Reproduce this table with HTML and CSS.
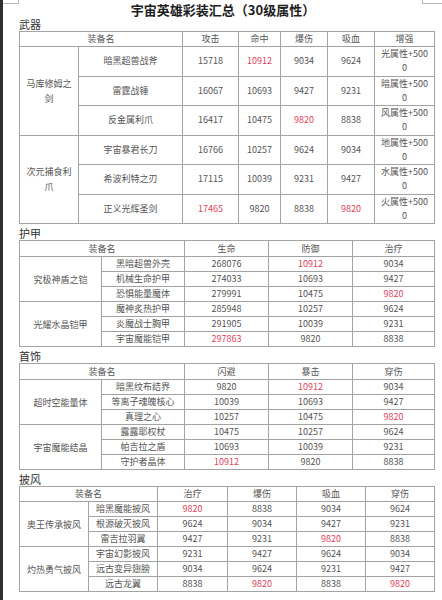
FILE: index.html
```html
<!DOCTYPE html>
<html lang="zh-CN">
<head>
<meta charset="utf-8">
<title>宇宙英雄彩装汇总</title>
<link rel="stylesheet" href="styles.css">
</head>
<body>
<div class="corner corner-left"></div>
<div class="corner corner-right"></div>
<main class="page">
  <h1 class="title">宇宙英雄彩装汇总（30级属性）</h1>

  <section class="section first">
    <h2 class="label">武器</h2>
    <table class="grid weapon">
      <colgroup><col class="w59"><col class="w104"><col class="w56"><col class="w42"><col class="w47"><col class="w47"><col class="w60"></colgroup>
      <tr class="head"><td colspan="2">装备名</td><td>攻击</td><td>命中</td><td>爆伤</td><td>吸血</td><td>增强</td></tr>
      <tr class="tall"><td rowspan="3" class="group">马库修姆之剑</td><td>暗黑超兽战斧</td><td>15718</td><td class="red">10912</td><td>9034</td><td>9624</td><td class="wrap">光属性+5000</td></tr>
      <tr class="tall"><td>雷霆战锤</td><td>16067</td><td>10693</td><td>9427</td><td>9231</td><td class="wrap">暗属性+5000</td></tr>
      <tr class="tall"><td>反金属利爪</td><td>16417</td><td>10475</td><td class="red">9820</td><td>8838</td><td class="wrap">风属性+5000</td></tr>
      <tr class="tall"><td rowspan="3" class="group">次元捕食利爪</td><td>宇宙暴君长刀</td><td>16766</td><td>10257</td><td>9624</td><td>9034</td><td class="wrap">地属性+5000</td></tr>
      <tr class="tall"><td>希波利特之刃</td><td>17115</td><td>10039</td><td>9231</td><td>9427</td><td class="wrap">水属性+5000</td></tr>
      <tr class="tall"><td>正义光辉圣剑</td><td class="red">17465</td><td>9820</td><td>8838</td><td class="red">9820</td><td class="wrap">火属性+5000</td></tr>
    </table>
  </section>

  <section class="section">
    <h2 class="label">护甲</h2>
    <table class="grid five">
      <colgroup><col class="w82"><col class="w83"><col class="w84"><col class="w84"><col class="w82"></colgroup>
      <tr class="head"><td colspan="2">装备名</td><td>生命</td><td>防御</td><td>治疗</td></tr>
      <tr><td rowspan="3" class="group">究极神盾之铠</td><td>黑暗超兽外壳</td><td>268076</td><td class="red">10912</td><td>9034</td></tr>
      <tr><td>机械生命护甲</td><td>274033</td><td>10693</td><td>9427</td></tr>
      <tr><td>恐惧能量魔体</td><td>279991</td><td>10475</td><td class="red">9820</td></tr>
      <tr><td rowspan="3" class="group">光耀水晶铠甲</td><td>魔神炙热护甲</td><td>285948</td><td>10257</td><td>9624</td></tr>
      <tr><td>炎魔战士胸甲</td><td>291905</td><td>10039</td><td>9231</td></tr>
      <tr><td>宇宙魔能铠甲</td><td class="red">297863</td><td>9820</td><td>8838</td></tr>
    </table>
  </section>

  <section class="section">
    <h2 class="label">首饰</h2>
    <table class="grid five">
      <colgroup><col class="w82"><col class="w83"><col class="w84"><col class="w84"><col class="w82"></colgroup>
      <tr class="head"><td colspan="2">装备名</td><td>闪避</td><td>暴击</td><td>穿伤</td></tr>
      <tr><td rowspan="3" class="group">超时空能量体</td><td>暗黑纹布结界</td><td>9820</td><td class="red">10912</td><td>9034</td></tr>
      <tr><td>等离子魂魄核心</td><td>10039</td><td>10693</td><td>9427</td></tr>
      <tr><td>真理之心</td><td>10257</td><td>10475</td><td class="red">9820</td></tr>
      <tr><td rowspan="3" class="group">宇宙魔能结晶</td><td>露露耶权杖</td><td>10475</td><td>10257</td><td>9624</td></tr>
      <tr><td>帕吉拉之盾</td><td>10693</td><td>10039</td><td>9231</td></tr>
      <tr><td>守护者晶体</td><td class="red">10912</td><td>9820</td><td>8838</td></tr>
    </table>
  </section>

  <section class="section">
    <h2 class="label">披风</h2>
    <table class="grid six">
      <colgroup><col class="w69"><col class="w69"><col class="w70"><col class="w69"><col class="w69"><col class="w69"></colgroup>
      <tr class="head"><td colspan="2">装备名</td><td>治疗</td><td>爆伤</td><td>吸血</td><td>穿伤</td></tr>
      <tr><td rowspan="3" class="group">奥王传承披风</td><td>暗黑魔能披风</td><td class="red">9820</td><td>8838</td><td>9034</td><td>9624</td></tr>
      <tr><td>根源破灭披风</td><td>9624</td><td>9034</td><td>9427</td><td>9231</td></tr>
      <tr><td>雷吉拉羽翼</td><td>9427</td><td>9231</td><td class="red">9820</td><td>8838</td></tr>
      <tr><td rowspan="3" class="group">灼热勇气披风</td><td>宇宙幻影披风</td><td>9231</td><td>9427</td><td>9624</td><td>9034</td></tr>
      <tr><td>远古变异翅膀</td><td>9034</td><td>9624</td><td>9231</td><td>9427</td></tr>
      <tr><td>远古龙翼</td><td>8838</td><td class="red">9820</td><td>8838</td><td class="red">9820</td></tr>
    </table>
  </section>
</main>
</body>
</html>
```

FILE: styles.css
```css
html, body {
  margin: 0;
  padding: 0;
  background: #ffffff;
}

body {
  position: relative;
  width: 442px;
  height: 600px;
  overflow: hidden;
  box-sizing: border-box;
  border-left: 3px solid #2f2f2f;
  font-family: "Noto Sans CJK SC", Roboto, sans-serif;
  color: #555555;
}

.corner {
  position: absolute;
  top: -12px;
  height: 14px;
  border: 1px solid #b8b8b8;
  background: #ffffff;
}

.corner-left {
  left: -2px;
  width: 16px;
}

.corner-right {
  left: 419px;
  width: 30px;
}

.page {
  padding: 0 5px 0 16px;
}

.title {
  margin: 0;
  padding-top: 2px;
  height: 15px;
  line-height: 15px;
  font-size: 13px;
  font-weight: bold;
  color: #1e1e1e;
  text-align: center;
  padding-right: 10px;
}

.section {
  margin-top: 2px;
}

.section.first {
  margin-top: 0;
}

.label {
  margin: 0;
  height: 14px;
  line-height: 14px;
  font-size: 11px;
  font-weight: normal;
  color: #333333;
}

.grid {
  width: 415px;
  table-layout: fixed;
  border-collapse: collapse;
  font-size: 9px;
  color: #555555;
}

.grid tr {
  height: 15px;
}

.grid tr.tall {
  height: 29.5px;
}

.five tr.head {
  height: 16px;
}

.grid td {
  border: 1px solid #a3a3a3;
  padding: 0 2px;
  line-height: 12px;
  text-align: center;
  white-space: nowrap;
  overflow: hidden;
}

.grid td.group {
  white-space: normal;
  line-height: 15px;
}

.weapon td.group {
  padding: 0 5px;
  word-break: break-all;
}

.grid td.wrap {
  white-space: normal;
  word-break: break-all;
  line-height: 14px;
  padding: 0 5px;
}

.grid td.red {
  color: #e0435c;
}

.w42 { width: 42px; }
.w47 { width: 47px; }
.w56 { width: 56px; }
.w59 { width: 59px; }
.w60 { width: 60px; }
.w69 { width: 69px; }
.w70 { width: 70px; }
.w82 { width: 82px; }
.w83 { width: 83px; }
.w84 { width: 84px; }
.w104 { width: 104px; }
```
